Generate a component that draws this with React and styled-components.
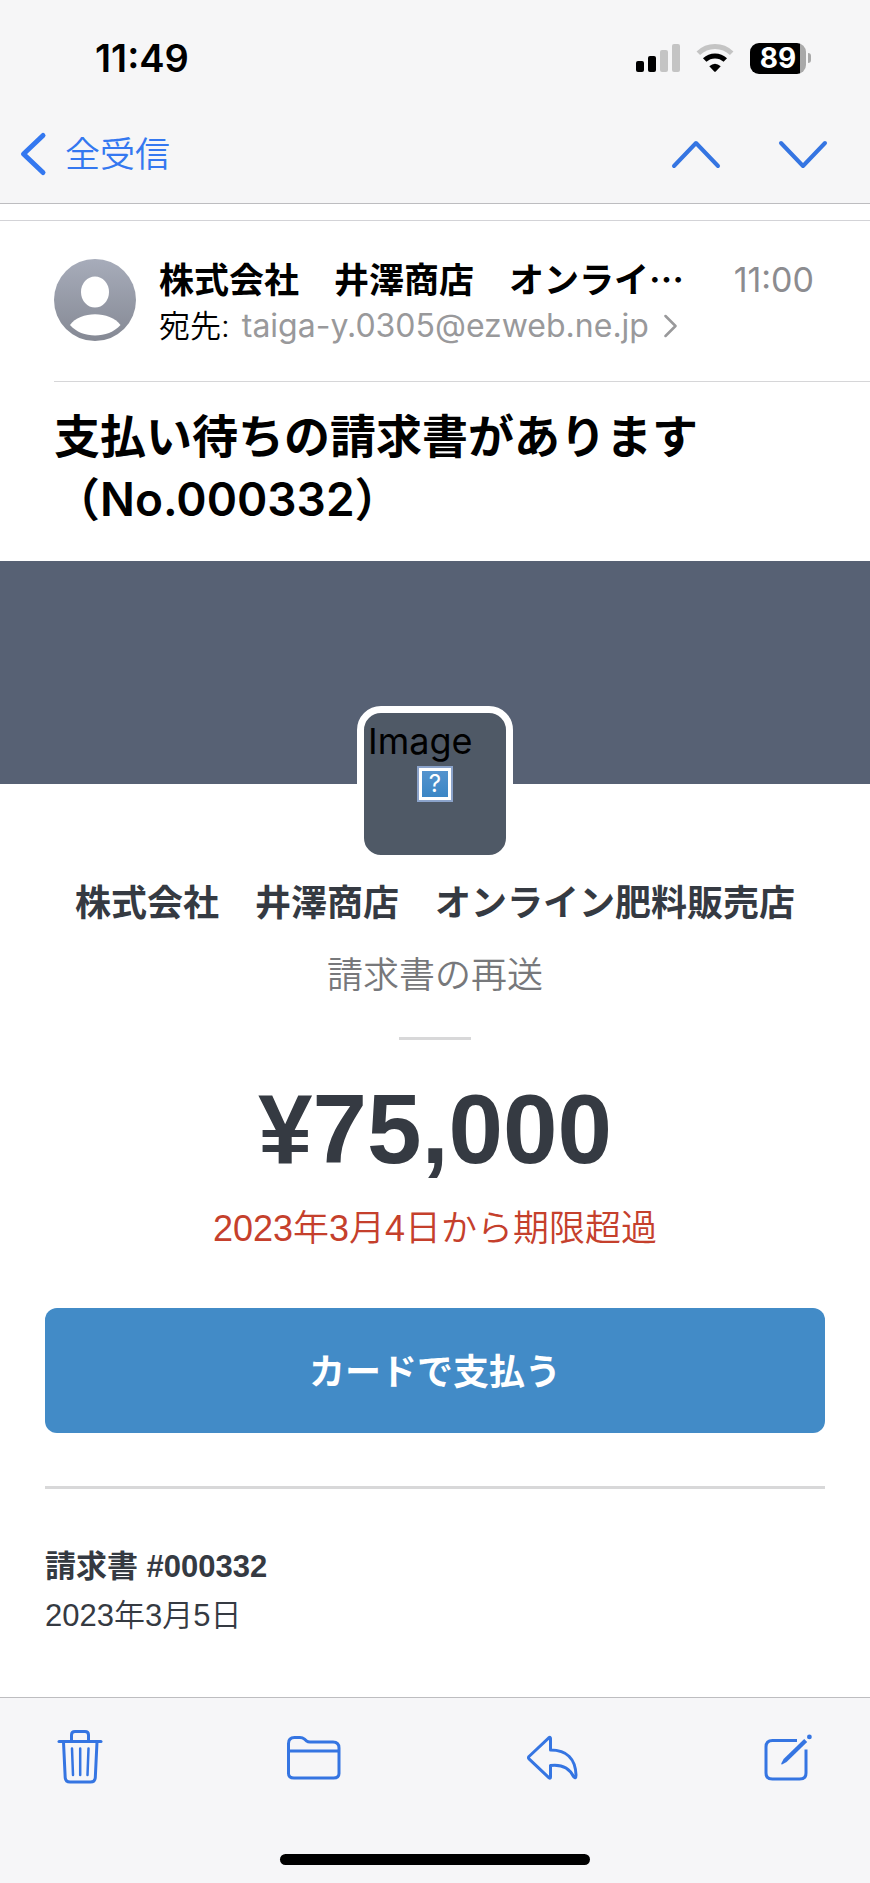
import React from 'react';
import styled, { createGlobalStyle } from 'styled-components';

const GlobalStyle = createGlobalStyle`
  *, *::before, *::after {
    box-sizing: border-box;
  }
  body {
    margin: 0;
    background: #fff;
    color: #000;
    font-family: Inter, 'Noto Sans CJK JP', sans-serif;
  }
  h1, h2, p {
    margin: 0;
  }
  a {
    color: inherit;
    text-decoration: none;
  }
  svg {
    display: block;
    flex: none;
  }
`;

const Screen = styled.div`
  display: flex;
  flex-direction: column;
  min-height: 100vh;
`;

const TopBar = styled.header`
  background: #f6f6f7;
  border-bottom: 1px solid #bdbdc0;
`;

const StatusBar = styled.div`
  display: flex;
  align-items: center;
  justify-content: space-between;
  height: 116px;
  padding: 0 59px 0 95px;
`;

const Clock = styled.time`
  font-size: 38px;
  font-weight: 600;
  line-height: 44px;
`;

const StatusIcons = styled.div`
  display: flex;
  align-items: center;
  gap: 16px;
`;

const Battery = styled.div`
  display: flex;
  align-items: center;
  gap: 2px;
`;

const BatteryBody = styled.div`
  display: flex;
  align-items: center;
  justify-content: center;
  width: 56px;
  height: 31px;
  border-radius: 9px;
  background: linear-gradient(to right, #000 89%, #a9a9a9 89%);
  color: #fff;
  font-size: 28px;
  font-weight: 700;
  line-height: 31px;
`;

const BatteryCap = styled.div`
  width: 3px;
  height: 10px;
  border-radius: 0 5px 5px 0;
  background: #a9a9a9;
`;

const NavBar = styled.nav`
  display: flex;
  align-items: center;
  justify-content: space-between;
  padding: 12px 40px 23px 18px;
`;

const BackLink = styled.a`
  display: flex;
  align-items: center;
  gap: 17px;
  color: #3478f0;
  font-size: 35px;
  font-weight: 350;
  line-height: 52px;
`;

const NavArrows = styled.div`
  display: flex;
  gap: 53px;
`;

const IconButton = styled.button`
  display: flex;
  padding: 0;
  border: 0;
  background: none;
  color: #3575e2;
  cursor: pointer;
`;

const Message = styled.main`
  flex: 1;
  margin-top: 16px;
  border-top: 1px solid #d3d3d7;
`;

const Sender = styled.section`
  display: flex;
  align-items: center;
  gap: 23px;
  margin-left: 54px;
  padding: 36px 56px 32px 0;
  border-bottom: 1px solid #d6d6d8;
`;

const Avatar = styled.div`
  align-self: flex-start;
  padding-top: 2px;
`;

const SenderText = styled.div`
  flex: 1;
  min-width: 0;
`;

const SenderRow = styled.div`
  display: flex;
  align-items: center;
  justify-content: space-between;
  line-height: 46px;
`;

const SenderName = styled.h2`
  overflow: hidden;
  font-size: 35px;
  font-weight: 600;
  line-height: 46px;
  white-space: nowrap;
`;

const SentTime = styled.time`
  color: #8c8c90;
  font-size: 34px;
  font-weight: 400;
`;

const Recipient = styled.p`
  display: flex;
  align-items: center;
  font-size: 31px;
  font-weight: 350;
  line-height: 46px;
`;

const Address = styled.a`
  display: flex;
  align-items: center;
  gap: 15px;
  margin-left: 12px;
  color: #99999b;
  font-size: 32px;
  font-weight: 400;
`;

const Subject = styled.h1`
  padding: 23px 54px 30px;
  font-size: 46px;
  font-weight: 600;
  line-height: 63px;
`;

const Banner = styled.div`
  display: flex;
  justify-content: center;
  height: 223px;
  padding-top: 145px;
  background: #576174;
`;

const StoreImage = styled.div`
  flex: none;
  width: 156px;
  height: 156px;
  padding: 6px 4px;
  border: 7px solid #fff;
  border-radius: 24px;
  background: #4f5966;
  font-size: 36px;
  line-height: 44px;
`;

const MissingImage = styled.div`
  display: flex;
  align-items: center;
  justify-content: center;
  width: 36px;
  height: 36px;
  margin: 3px auto 0;
  border: 2px solid #8ba3ca;
  outline: 3px solid #fff;
  outline-offset: -5px;
  background: linear-gradient(#5795cf, #3885c4);
  color: #fff;
  font-size: 24px;
  line-height: 30px;
`;

const Invoice = styled.section`
  display: flex;
  flex-direction: column;
  align-items: center;
  padding: 93px 45px 50px;
  color: #353a42;
  font-family: 'Liberation Sans', 'Noto Sans CJK JP', sans-serif;
  text-align: center;
`;

const StoreName = styled.h2`
  font-size: 36px;
  font-weight: 600;
  line-height: 54px;
`;

const Note = styled.p`
  margin-top: 18px;
  color: #77787b;
  font-size: 36px;
  font-weight: 350;
  line-height: 54px;
`;

const ShortRule = styled.hr`
  width: 72px;
  height: 3px;
  margin: 34px 0 0;
  border: 0;
  background: #d8d8d9;
`;

const Amount = styled.p`
  margin-top: 33px;
  font-size: 98px;
  font-weight: 700;
  line-height: 112px;
`;

const Overdue = styled(Note)`
  margin-top: 17px;
  color: #c5402c;
`;

const PayButton = styled.button`
  align-self: stretch;
  height: 125px;
  margin-top: 52px;
  padding: 0 0 4px;
  border: 0;
  border-radius: 12px;
  background: #428bc7;
  color: #fff;
  font-family: inherit;
  font-size: 36px;
  font-weight: 600;
  cursor: pointer;
`;

const Rule = styled.hr`
  align-self: stretch;
  height: 3px;
  margin: 53px 0 0;
  border: 0;
  background: #d8d8d9;
`;

const Details = styled.div`
  align-self: stretch;
  margin-top: 53px;
  font-size: 31px;
  font-weight: 350;
  line-height: 49px;
  text-align: left;
`;

const InvoiceNumber = styled.p`
  font-weight: 600;
`;

const BottomBar = styled.footer`
  display: flex;
  flex-direction: column;
  align-items: center;
  padding-bottom: 18px;
  border-top: 1px solid #bdbdc0;
  background: #f6f6f8;
`;

const Toolbar = styled.div`
  display: flex;
  align-items: center;
  justify-content: space-between;
  align-self: stretch;
  height: 120px;
  padding: 0 56px;
`;

const HomeIndicator = styled.div`
  width: 310px;
  height: 11px;
  margin-top: 36px;
  border-radius: 6px;
  background: #000;
`;

const stroke = {
  fill: 'none',
  stroke: 'currentColor',
  strokeLinecap: 'round',
  strokeLinejoin: 'round',
};

const SignalIcon = () => (
  <svg width="44" height="28" viewBox="0 0 44 28" aria-hidden="true">
    <rect x="0" y="17" width="8" height="11" rx="2" />
    <rect x="12" y="12" width="8" height="16" rx="2" />
    <rect x="24" y="6" width="8" height="22" rx="2" fill="#c4c4c4" />
    <rect x="36" y="0" width="8" height="28" rx="2" fill="#c4c4c4" />
  </svg>
);

const WifiIcon = () => (
  <svg width="38" height="28" viewBox="0 0 38 28" aria-hidden="true">
    <path d="M2.3 9.3A24 24 0 0 1 35.7 9.3" fill="none" stroke="#c4c4c4" strokeWidth="5" />
    <path d="M8.7 16A15 15 0 0 1 29.3 16" fill="none" stroke="#000" strokeWidth="5" />
    <path d="M13.3 22.2Q19 17.2 24.7 22.2L19.8 27.4Q19 28 18.2 27.4Z" />
  </svg>
);

const BackIcon = () => (
  <svg width="30" height="46" viewBox="0 0 30 46" aria-hidden="true" {...stroke} strokeWidth="5">
    <path d="M25 4.5L5.5 23L25 41.5" />
  </svg>
);

const UpIcon = () => (
  <svg width="54" height="32" viewBox="0 0 54 32" aria-hidden="true" {...stroke} strokeWidth="4">
    <path d="M5 28L27 5L49 28" />
  </svg>
);

const DownIcon = () => (
  <svg width="54" height="32" viewBox="0 0 54 32" aria-hidden="true" {...stroke} strokeWidth="4">
    <path d="M5 5L27 28L49 5" />
  </svg>
);

const DisclosureIcon = () => (
  <svg width="13" height="24" viewBox="0 0 13 24" aria-hidden="true" {...stroke} strokeWidth="2.5">
    <path d="M1.5 2L11.5 12L1.5 22" />
  </svg>
);

const PersonIcon = () => (
  <svg width="82" height="82" viewBox="0 0 82 82" aria-hidden="true">
    <defs>
      <linearGradient id="person" x1="0" y1="0" x2="0" y2="1">
        <stop offset="0" stopColor="#a7acba" />
        <stop offset="1" stopColor="#858994" />
      </linearGradient>
    </defs>
    <circle cx="41" cy="41" r="41" fill="url(#person)" />
    <ellipse cx="41" cy="33" rx="14" ry="15.5" fill="#fff" />
    <path d="M16 66C26 51.5 56 51.5 66.5 66C54 80 28 80 16 66Z" fill="#fff" />
  </svg>
);

const TrashIcon = () => (
  <svg width="48" height="56" viewBox="0 1 48 56" aria-hidden="true" {...stroke} strokeWidth="3">
    <path d="M3 12.5H45" />
    <path d="M15.5 12V6Q15.5 2.5 19 2.5H29Q32.5 2.5 32.5 6V12" />
    <path d="M7.5 13L9.2 48.5Q9.5 53 14 53H34.5Q39 53 39.3 48.5L41 13" />
    <path d="M16 19.5L17 46M24.2 19.5V46M32.5 19.5L31.5 46" strokeWidth="2.5" />
  </svg>
);

const FolderIcon = () => (
  <svg width="56" height="48" viewBox="1 0 56 48" aria-hidden="true" {...stroke} strokeWidth="3">
    <path d="M2.5 39.5V9.5Q2.5 3.5 8.5 3.5H14Q16.5 3.5 18.5 5.2L20.2 6.7Q22 8 24 8H47Q53 8 53 14V39.5Q53 44 47.5 44H8Q2.5 44 2.5 39.5Z" />
    <path d="M3 17H53" strokeLinecap="butt" />
  </svg>
);

const ReplyIcon = () => (
  <svg width="54" height="48" viewBox="3 0 54 48" aria-hidden="true" {...stroke} strokeWidth="3">
    <path d="M26.5 4.5Q26.5 2.5 24.8 3.8L5 22.5Q4 23.7 5 24.9L24.8 43.6Q26.5 45 26.5 43V31.5Q43 29.5 49.5 42.5Q52 45.5 52 41C51.5 25 43 16 26.5 16Z" />
  </svg>
);

const ComposeIcon = () => (
  <svg width="50" height="50" viewBox="1 0 50 50" aria-hidden="true" {...stroke} strokeWidth="3">
    <path d="M34 7.5H9.5Q3 7.5 3 14V40Q3 46 9.5 46H36.5Q43 46 43 40V16.5" strokeLinecap="butt" />
    <path d="M41.2 6L44.2 9L23.6 29L19.5 31.2Q17.6 32 18.5 30L20.6 26Z" fill="currentColor" stroke="none" />
    <circle cx="46.4" cy="3.9" r="2.4" fill="currentColor" stroke="none" />
  </svg>
);

const actions = [
  { label: '削除', Icon: TrashIcon },
  { label: '移動', Icon: FolderIcon },
  { label: '返信', Icon: ReplyIcon },
  { label: '新規作成', Icon: ComposeIcon },
];

const App = () => {
  return (
    <Screen lang="ja">
      <GlobalStyle />
      <TopBar>
        <StatusBar>
          <Clock>11:49</Clock>
          <StatusIcons>
            <SignalIcon />
            <WifiIcon />
            <Battery>
              <BatteryBody>89</BatteryBody>
              <BatteryCap />
            </Battery>
          </StatusIcons>
        </StatusBar>
        <NavBar>
          <BackLink href="#inbox">
            <BackIcon />
            全受信
          </BackLink>
          <NavArrows>
            <IconButton type="button" aria-label="前のメッセージ">
              <UpIcon />
            </IconButton>
            <IconButton type="button" aria-label="次のメッセージ">
              <DownIcon />
            </IconButton>
          </NavArrows>
        </NavBar>
      </TopBar>

      <Message>
        <Sender>
          <Avatar>
            <PersonIcon />
          </Avatar>
          <SenderText>
            <SenderRow>
              <SenderName>株式会社　井澤商店　オンライ⋯</SenderName>
              <SentTime>11:00</SentTime>
            </SenderRow>
            <Recipient>
              宛先:
              <Address href="mailto:taiga-y.0305@ezweb.ne.jp">
                taiga-y.0305@ezweb.ne.jp
                <DisclosureIcon />
              </Address>
            </Recipient>
          </SenderText>
        </Sender>
        <Subject>支払い待ちの請求書があります（No.000332）</Subject>

        <Banner>
          <StoreImage>
            Image
            <MissingImage>?</MissingImage>
          </StoreImage>
        </Banner>
        <Invoice>
          <StoreName>株式会社　井澤商店　オンライン肥料販売店</StoreName>
          <Note>請求書の再送</Note>
          <ShortRule />
          <Amount>¥75,000</Amount>
          <Overdue>2023年3月4日から期限超過</Overdue>
          <PayButton type="button">カードで支払う</PayButton>
          <Rule />
          <Details>
            <InvoiceNumber>請求書 #000332</InvoiceNumber>
            <p>2023年3月5日</p>
          </Details>
        </Invoice>
      </Message>

      <BottomBar>
        <Toolbar>
          {actions.map(({ label, Icon }) => (
            <IconButton key={label} type="button" aria-label={label}>
              <Icon />
            </IconButton>
          ))}
        </Toolbar>
        <HomeIndicator />
      </BottomBar>
    </Screen>
  );
};

export default App;
